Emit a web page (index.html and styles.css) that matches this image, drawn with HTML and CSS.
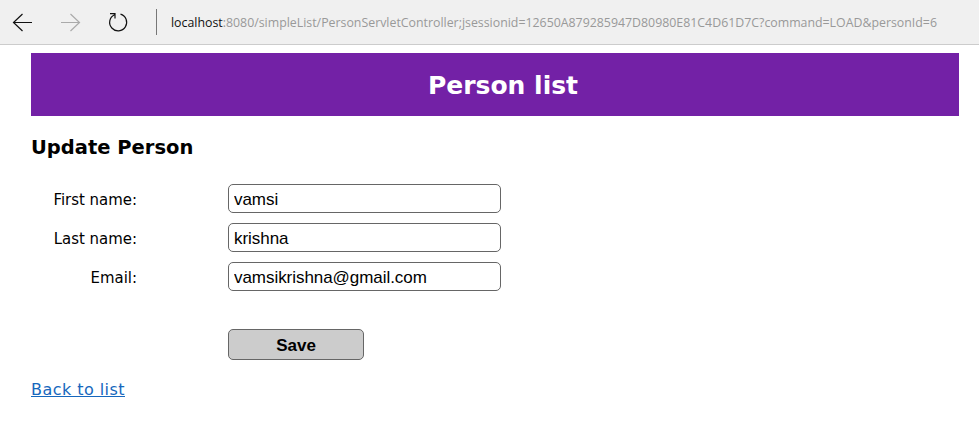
FILE: index.html
```html
<!DOCTYPE html>
<html lang="en">
<head>
<meta charset="utf-8">
<title>Person list</title>
<link rel="stylesheet" href="styles.css">
</head>
<body>
<div class="toolbar">
  <svg class="nav" width="140" height="44" viewBox="0 0 140 44" fill="none" stroke="#111" stroke-width="1.2">
    <path d="M32 22.500H14M22.500 14L13.500 22.500L22.500 31"/>
    <path stroke="#aaa" d="M61 22.500H79M70.500 14L79.500 22.500L70.500 31"/>
    <path d="M120.500 14.200A8.500 8.500 0 1 1 114.500 14.700M110 13.700H115V18.500"/>
  </svg>
  <span class="divider"></span>
  <svg class="address" width="766" height="44"><text x="0" y="27" textLength="766" lengthAdjust="spacingAndGlyphs"><tspan class="host">localhost</tspan>:8080/simpleList/PersonServletController;jsessionid=12650A879285947D80980E81C4D61D7C?command=LOAD&amp;personId=6</text></svg>
</div>
<main>
  <header><h2>Person list</h2></header>
  <h3>Update Person</h3>
  <form>
    <label for="first">First name:</label><input id="first" value="vamsi">
    <label for="last">Last name:</label><input id="last" value="krishna">
    <label for="email">Email:</label><input id="email" value="vamsikrishna@gmail.com">
    <button type="button">Save</button>
  </form>
  <a href="#">Back to list</a>
</main>
</body>
</html>
```

FILE: styles.css
```css
* { box-sizing: border-box; }
body { margin: 0; background: #fff; color: #000; font: 16px "DejaVu Sans", sans-serif; overflow: hidden; }
.toolbar { display: flex; align-items: center; height: 45px; background: #f0f0f0; border-bottom: 1px solid #ccc; }
.divider { width: 1px; height: 26px; margin-left: 16px; background: #777; }
.address { margin-left: 14px; overflow: visible; font: 13px "Open Sans", sans-serif; fill: #999; }
.host { fill: #111; }
main { padding: 8px 20px 0 31px; }
header { display: flex; align-items: center; justify-content: center; height: 63px; padding: 1px 0 0 16px; background: #7321a6; color: #fff; }
h2 { margin: 0; font-size: 25px; }
h3 { margin: 20px 0 24px; font-size: 19.5px; line-height: 24px; }
form { display: grid; grid-template-columns: 106px 273px; column-gap: 91px; row-gap: 10px; align-items: center; }
label { padding-top: 2px; text-align: right; font-family: "DejaVu Sans Condensed", "DejaVu Sans", sans-serif; font-stretch: condensed; font-size: 16.6px; white-space: nowrap; }
input { height: 29px; padding: 2px 5px 0; border: 1px solid #666; border-radius: 5px; background: #fff; color: #000; font: 17px "Liberation Sans", sans-serif; letter-spacing: -.05px; }
button { grid-column: 2; width: 136px; height: 31px; margin-top: 28px; padding: 2px 0 0; border: 1px solid #666; border-radius: 5px; background: #ccc; color: #000; font: bold 17px "Liberation Sans", sans-serif; }
a { display: block; width: max-content; margin-top: 20px; color: #1667bd; line-height: 20px; letter-spacing: .45px; }
```
